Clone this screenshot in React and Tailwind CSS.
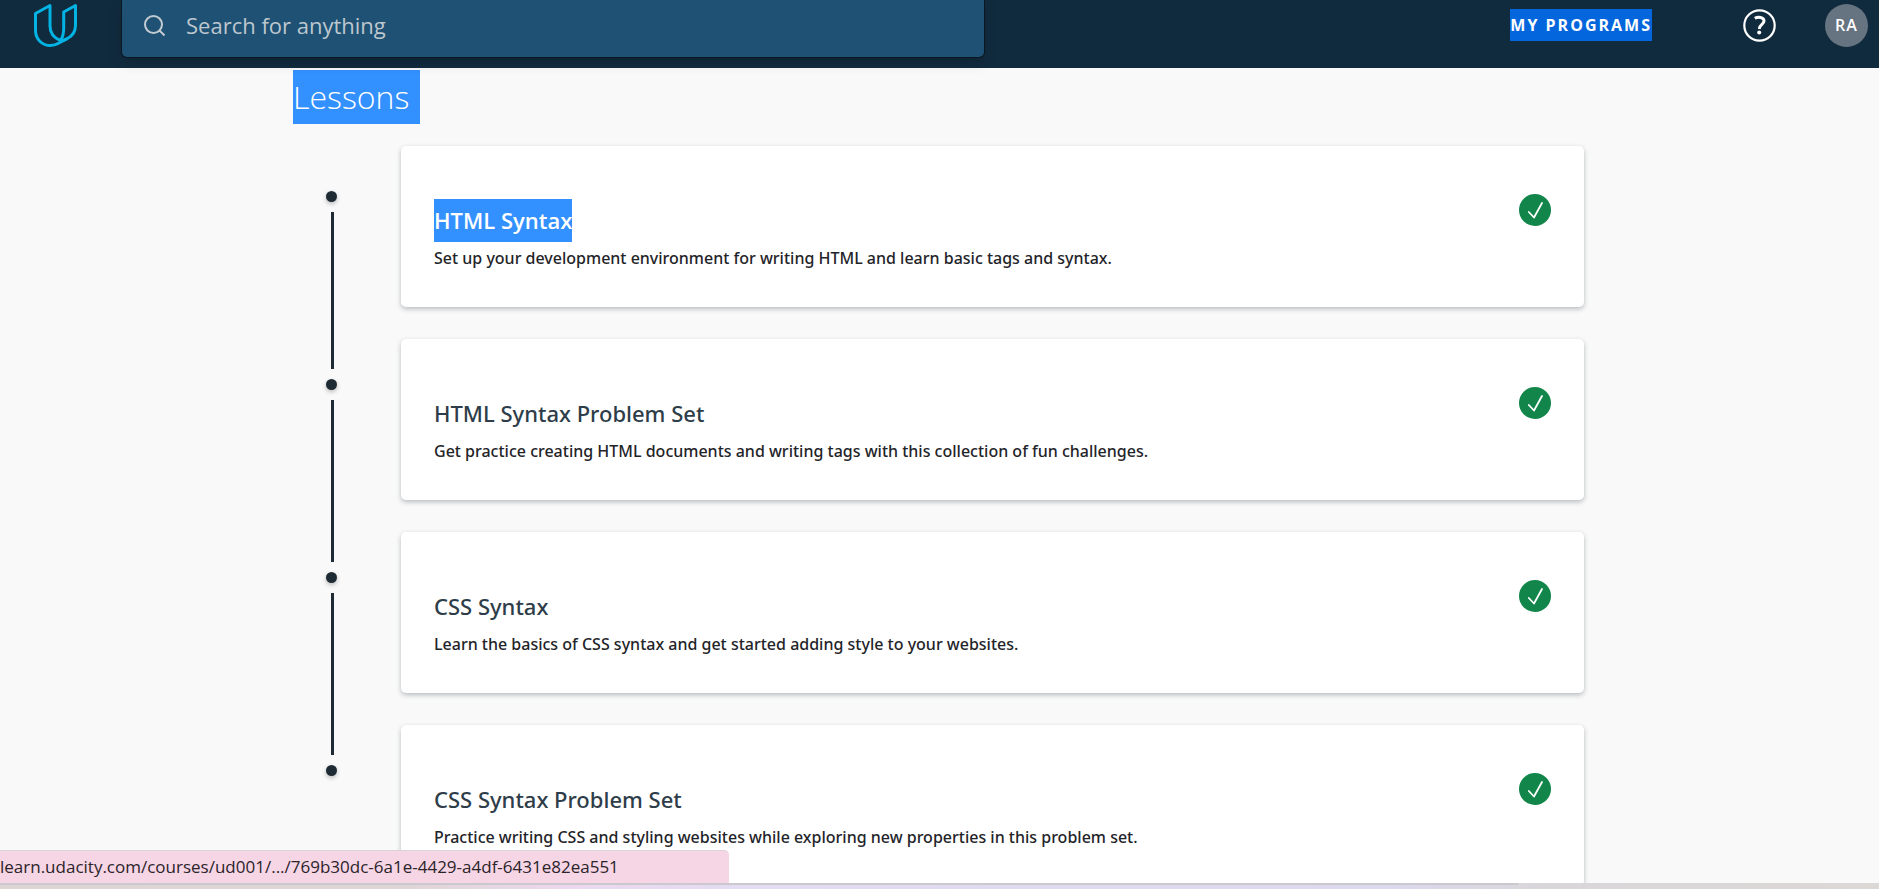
import React from "react";

const lessons = [
  {
    title: "HTML Syntax",
    text: "Set up your development environment for writing HTML and learn basic tags and syntax.",
    selected: true,
  },
  {
    title: "HTML Syntax Problem Set",
    text: "Get practice creating HTML documents and writing tags with this collection of fun challenges.",
  },
  {
    title: "CSS Syntax",
    text: "Learn the basics of CSS syntax and get started adding style to your websites.",
  },
  {
    title: "CSS Syntax Problem Set",
    text: "Practice writing CSS and styling websites while exploring new properties in this problem set.",
  },
];

function Logo() {
  return (
    <svg width="44" height="44" viewBox="0 0 44 44" fill="none" stroke="#02b3e4" strokeWidth="3" strokeLinejoin="round" aria-hidden="true">
      <path d="M16 1.500 1.500 9.500V26.500C1.500 35 8 41.500 16.500 41.500C20 41.500 22.500 40.500 25 39L33.500 34.500C39 31.500 41.500 28 41.500 21.500V1.500L29.700 8V24C29.700 29.500 29 33 26.500 36.500C20 34 16 29 16 22Z" />
      <path d="M26.500 36.500C29.500 36.500 31.500 35.800 33.500 34.500" />
    </svg>
  );
}

function Header() {
  return (
    <header className="relative z-10 flex h-[68px] shrink-0 items-start bg-[#112b3e]">
      <a href="#home" aria-label="Udacity home" className="ml-[34px] mt-[4px]">
        <Logo />
      </a>
      <form className="ml-[44px] flex h-[57px] w-[862px] items-center gap-5 rounded-b-[5px] bg-[#1e5173] pb-[8px] pl-[20px] shadow-[0_0_0_1px_rgba(10,20,28,0.8),0_5px_14px_rgba(0,0,0,0.18)]">
        <svg width="24" height="24" viewBox="0 0 24 24" fill="none" stroke="#c3cbd2" strokeWidth="2" aria-hidden="true">
          <circle cx="11.500" cy="11.500" r="8.500" />
          <path d="M17.500 17.500 22.500 22.500" />
        </svg>
        <input
          type="search"
          aria-label="Search for anything"
          placeholder="Search for anything"
          className="min-w-0 flex-1 bg-transparent text-[22px] leading-[32px] outline-none placeholder:text-[#bdc7cf]"
        />
      </form>
      <nav className="ml-auto mr-[11px] flex h-[50px] items-center">
        <a href="#programs" className="mr-[91px] bg-[#0466dc] text-[16px] font-bold leading-[32px] tracking-[2px] text-white">
          MY PROGRAMS
        </a>
        <button type="button" aria-label="Help" className="mr-[49px]">
          <svg width="33" height="33" viewBox="0 0 33 33" fill="none" stroke="#ffffff" aria-hidden="true">
            <circle cx="16.500" cy="16.500" r="15.200" strokeWidth="2.200" />
            <path d="M11.800 9.300C15 7.600 21 7.700 21 12C21 15.500 16.300 15.300 16.300 20" strokeWidth="3" />
            <circle cx="16.200" cy="23.500" r="2" fill="#ffffff" stroke="none" />
          </svg>
        </button>
        <button type="button" aria-label="Account" className="size-[43px] rounded-full bg-[#667380] text-[16px] font-semibold tracking-[1px] text-white">
          RA
        </button>
      </nav>
    </header>
  );
}

function Timeline() {
  return (
    <div aria-hidden="true" className="flex w-[108px] shrink-0 flex-col items-start gap-[10px] pl-[33px] pt-[45px]">
      {lessons.map((lesson, i) => (
        <React.Fragment key={lesson.title}>
          {i > 0 && <span className={`ml-[5px] w-[3px] shrink-0 bg-[#1f2b34] ${i === 1 ? "h-[157px]" : "h-[162px]"}`} />}
          <span className="size-[11px] shrink-0 rounded-full bg-[#1f2b34] shadow-[0_2px_4px_rgba(0,0,0,0.25)]" />
        </React.Fragment>
      ))}
    </div>
  );
}

function Check() {
  return (
    <svg width="32" height="32" viewBox="0 0 32 32" role="img" aria-label="Completed" className="mt-[48px] shrink-0">
      <circle cx="16" cy="16" r="16" fill="#12864a" />
      <path d="M9.800 18 15 23.500 23 9" fill="none" stroke="#ffffff" strokeWidth="1.800" strokeLinecap="round" strokeLinejoin="round" />
    </svg>
  );
}

function LessonCard({ lesson }) {
  return (
    <li className="flex h-[161px] items-start justify-between rounded-[5px] bg-white px-[33px] shadow-[0_2px_5px_rgba(30,43,52,0.3)]">
      <div className="pt-[53px]">
        <h2 className="text-[22px] leading-[43px]">
          <a href="#lesson" className={lesson.selected ? "inline-block bg-[#3390ff] font-semibold text-white" : "inline-block font-['Noto_Sans','Open_Sans',sans-serif] font-medium text-[#2e3d49]"}>
            {lesson.title}
          </a>
        </h2>
        <p className="font-['Noto_Sans','Open_Sans',sans-serif] text-[16px] font-medium leading-[32px] text-[#1f2429]">{lesson.text}</p>
      </div>
      <Check />
    </li>
  );
}

export default function App() {
  return (
    <div className="relative flex h-screen flex-col overflow-hidden bg-[#f9f9f9] font-['Open_Sans',sans-serif]">
      <Header />
      <main className="mx-auto min-h-0 w-full max-w-[1293px] flex-1 pr-[2px] pt-[2px]">
        <h1 className="text-[32px] font-light leading-[54px] text-white">
          <span className="inline-block bg-[#3390ff] pr-[11px]">Lessons</span>
        </h1>
        <div className="flex pt-[22px]">
          <Timeline />
          <ol className="flex flex-1 flex-col gap-8">
            {lessons.map((lesson) => (
              <LessonCard key={lesson.title} lesson={lesson} />
            ))}
          </ol>
        </div>
      </main>
      <div className="absolute bottom-[6px] left-0 flex h-[33px] w-[729px] items-center rounded-tr-[5px] border-t border-[#dcd3d8] bg-[#f6d5e5] text-[17px] leading-[24px] text-[#2b2429]">
        learn.udacity.com/courses/ud001/.../769b30dc-6a1e-4429-a4df-6431e82ea551
      </div>
      <div className="relative h-[6px] shrink-0 bg-[linear-gradient(to_right,#dcd5d2,#e0d5d6_22%,#ecd8ee_30%,#e3dcf2_40%,#dcd8ee_74%,#d9d6da_82%,#dcd8d6)]">
        <div className="h-[2px] w-[1518px] bg-[#cbc8d0]" />
      </div>
    </div>
  );
}
